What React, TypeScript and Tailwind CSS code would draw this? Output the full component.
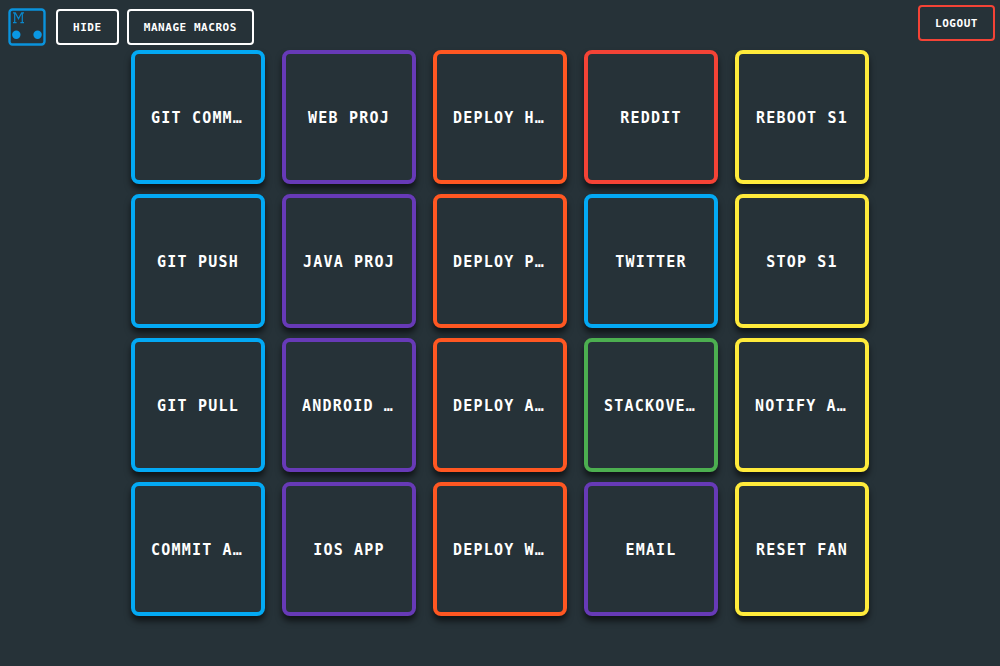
const tones = {
  blue: "border-[#03a9f4]",
  purple: "border-[#673ab7]",
  orange: "border-[#ff5722]",
  red: "border-[#f44336]",
  yellow: "border-[#ffeb3b]",
  green: "border-[#4caf50]",
};

type Macro = { name: string; tone: keyof typeof tones };

const macros: Macro[] = [
  { name: "GIT COMMIT", tone: "blue" },
  { name: "WEB PROJ", tone: "purple" },
  { name: "DEPLOY HEROKU", tone: "orange" },
  { name: "REDDIT", tone: "red" },
  { name: "REBOOT S1", tone: "yellow" },
  { name: "GIT PUSH", tone: "blue" },
  { name: "JAVA PROJ", tone: "purple" },
  { name: "DEPLOY PROD", tone: "orange" },
  { name: "TWITTER", tone: "blue" },
  { name: "STOP S1", tone: "yellow" },
  { name: "GIT PULL", tone: "blue" },
  { name: "ANDROID APP", tone: "purple" },
  { name: "DEPLOY AWS", tone: "orange" },
  { name: "STACKOVERFLOW", tone: "green" },
  { name: "NOTIFY ALL", tone: "yellow" },
  { name: "COMMIT ALL", tone: "blue" },
  { name: "IOS APP", tone: "purple" },
  { name: "DEPLOY WEB", tone: "orange" },
  { name: "EMAIL", tone: "purple" },
  { name: "RESET FAN", tone: "yellow" },
];

function Logo() {
  return (
    <svg viewBox="0 0 38 38" className="size-[38px]" fill="none" role="img" aria-label="Macros logo">
      <rect x="1.5" y="1.5" width="35" height="35" rx="3" stroke="#0a93dc" strokeWidth="2.4" />
      <path d="M5 4.8h2.3l3.2 6 3.2-6H16M6.7 4.8v9.9M14.3 4.8v9.9M5 14.7h3.6M12.4 14.7H16" stroke="#0a88cc" strokeWidth="1.2" />
      <circle cx="8.3" cy="26.7" r="4.2" fill="#0a98e4" />
      <circle cx="29.6" cy="26.7" r="4.2" fill="#0a98e4" />
    </svg>
  );
}

function BarButton({ label, tone }: { label: string; tone: string }) {
  return (
    <button type="button" className={`h-9 rounded border-2 px-[15px] pt-0.5 text-[11px] font-bold tracking-wider ${tone}`}>
      {label}
    </button>
  );
}

export default function App() {
  return (
    <div className="min-h-screen bg-[#263238] font-['DejaVu_Sans_Mono',monospace] text-white">
      <header className="flex h-[50px] items-start justify-between pl-2 pr-[5px]">
        <div className="flex items-start gap-2 pt-[9px]">
          <a href="#home" className="-mt-px mr-0.5" aria-label="Home">
            <Logo />
          </a>
          <BarButton label="HIDE" tone="border-white" />
          <BarButton label="MANAGE MACROS" tone="border-white" />
        </div>
        <div className="pt-[5px]">
          <BarButton label="LOGOUT" tone="border-[#f44336]" />
        </div>
      </header>
      <main className="grid grid-cols-[repeat(5,134px)] justify-center gap-x-[17px] gap-y-2.5 pb-10">
        {macros.map((macro) => (
          <button
            key={macro.name}
            type="button"
            className={`h-[134px] rounded-lg border-4 bg-[#263238] px-4 pt-0.5 text-[15px] font-bold tracking-[0.08em] shadow-[0_5px_6px_rgba(0,0,0,0.6)] ${tones[macro.tone]}`}
          >
            <span className="block truncate">{macro.name}</span>
          </button>
        ))}
      </main>
    </div>
  );
}
